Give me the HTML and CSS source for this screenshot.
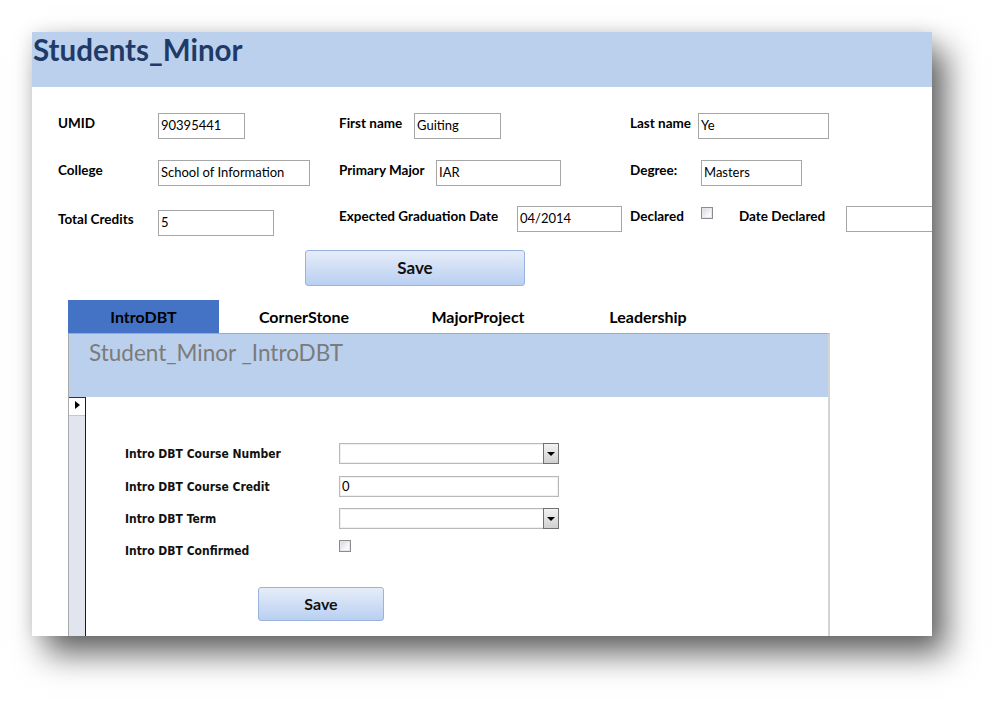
FILE: index.html
```html
<!DOCTYPE html>
<html>
<head>
<meta charset="utf-8">
<link rel="stylesheet" href="styles.css">
</head>
<body>
<div class="window">
  <div class="header"><h1 class="title">Students_Minor</h1></div>
  <div class="form">
    <div class="row r1">
      <div class="col c1"><span class="lbl w100">UMID</span><span class="box bw87">90395441</span></div>
      <div class="col c2"><span class="lbl w75">First name</span><span class="box bw87">Guiting</span></div>
      <div class="col c3"><span class="lbl w68">Last name</span><span class="box bw131">Ye</span></div>
    </div>
    <div class="row r2">
      <div class="col c1"><span class="lbl w100">College</span><span class="box bw152">School of Information</span></div>
      <div class="col c2"><span class="lbl w97">Primary Major</span><span class="box bw125">IAR</span></div>
      <div class="col c3"><span class="lbl w71">Degree:</span><span class="box bw101">Masters</span></div>
    </div>
    <div class="row r3">
      <div class="col c1 low"><span class="lbl w100 lowlbl">Total Credits</span><span class="box bw116">5</span></div>
      <div class="col c2"><span class="lbl w178">Expected Graduation Date</span><span class="box bw105">04/2014</span></div>
      <div class="col c3"><span class="lbl w71">Declared</span><span class="chk topchk"></span><span class="lbl w107">Date Declared</span><span class="box bw100"></span></div>
    </div>
    <div class="btn save-main">Save</div>
  </div>
  <div class="tabs">
    <div class="tab active t1">IntroDBT</div>
    <div class="tab t2">CornerStone</div>
    <div class="tab t3">MajorProject</div>
    <div class="tab t4">Leadership</div>
  </div>
  <div class="panel">
    <div class="panel-head"><span class="sub-title">Student_Minor _IntroDBT</span></div>
    <div class="panel-body">
      <div class="selector"><div class="sel-cell"><span class="tri"></span></div></div>
      <div class="content">
        <div class="frow"><span class="flbl">Intro DBT Course Number</span><span class="combo"><span class="combo-btn"><span class="dtri"></span></span></span></div>
        <div class="frow"><span class="flbl">Intro DBT Course Credit</span><span class="fbox">0</span></div>
        <div class="frow"><span class="flbl">Intro DBT Term</span><span class="combo"><span class="combo-btn"><span class="dtri"></span></span></span></div>
        <div class="frow"><span class="flbl">Intro DBT Confirmed</span><span class="chk"></span></div>
        <div class="btn save-sub">Save</div>
      </div>
    </div>
  </div>
</div>
</body>
</html>
```
FILE: styles.css
```css
html, body { margin: 0; padding: 0; background: #ffffff; }
body {
  box-sizing: border-box;
  min-height: 701px;
  padding: 32px 0 0 32px;
  font-family: Lato, "Open Sans", sans-serif;
}

.window {
  width: 900px;
  height: 604px;
  background: #ffffff;
  overflow: hidden;
  box-shadow: 14px 18px 30px rgba(0,0,0,0.6), 0 0 16px rgba(0,0,0,0.10);
}

.header { height: 55px; background: #bbd0ec; }
.title {
  margin: 0;
  font-family: Lato, sans-serif;
  font-weight: 700;
  font-size: 29.5px;
  line-height: 36px;
  padding: 0 0 0 1px;
  color: #1f3a68;
}

.form { padding: 26px 0 0 26px; }
.row { display: flex; height: 26px; }
.r1 { margin-bottom: 21px; }
.r2 { margin-bottom: 20px; }
.r3 { height: 30px; }
.col { display: flex; align-items: flex-start; flex: none; }
.c1 { width: 281px; }
.c2 { width: 291px; }
.c3 { width: 320px; }
.low { margin-top: 4px; }

.lbl {
  font-weight: 700;
  font-size: 13.5px;
  line-height: 16px;
  padding-top: 2px;
  color: #000;
  white-space: nowrap;
  flex: none;
}
.lowlbl { padding-top: 1px; }
.w100 { width: 100px; }
.w75 { width: 75px; }
.w68 { width: 68px; }
.w97 { width: 97px; }
.w71 { width: 71px; }
.w178 { width: 178px; }
.w107 { width: 107px; }

.box {
  box-sizing: border-box;
  height: 26px;
  border: 1px solid #a6a6a6;
  font-size: 13px;
  line-height: 18px;
  padding: 2px 0 0 2px;
  color: #000;
  white-space: nowrap;
  flex: none;
  background: #fff;
}
.bw87 { width: 87px; }
.bw131 { width: 131px; }
.bw152 { width: 152px; }
.bw125 { width: 125px; }
.bw101 { width: 101px; }
.bw116 { width: 116px; }
.bw105 { width: 105px; }
.bw100 { width: 100px; }

.chk {
  box-sizing: border-box;
  width: 12px;
  height: 12px;
  border: 1px solid #8c8c8c;
  background: linear-gradient(135deg, #d6d6d6, #f8f8ff 70%);
  box-shadow: inset 0 0 0 1px #e6e6e6;
  flex: none;
}
.topchk { margin-top: 1px; margin-right: 26px; }

.btn {
  box-sizing: border-box;
  border: 1px solid #98b3dd;
  border-radius: 3px;
  background: linear-gradient(#e6edf9, #b9cff1);
  font-weight: 700;
  color: #111;
  text-align: center;
}
.save-main {
  margin: 14px 0 0 247px;
  width: 220px;
  height: 36px;
  font-size: 17px;
  line-height: 34px;
}

.tabs { display: flex; margin: 14px 0 0 36px; height: 33px; }
.tab {
  font-weight: 700;
  font-size: 16px;
  line-height: 33px;
  text-align: center;
  color: #000;
}
.tab.active { background: #4472c4; }
.t1 { width: 151px; }
.t2 { width: 170px; }
.t3 { width: 178px; }
.t4 { width: 162px; }

.panel {
  box-sizing: border-box;
  margin-left: 36px;
  width: 762px;
  height: 320px;
  border-top: 1px solid #a9a9a9;
  border-left: 1px solid #a9a9a9;
  border-right: 2px solid #d4d4d4;
}
.panel-head {
  height: 63px;
  background: #bbd0ec;
}
.sub-title {
  display: block;
  padding: 6px 0 0 20px;
  font-size: 22.5px;
  line-height: 26px;
  color: #7b7b7b;
}
.panel-body { display: flex; height: 260px; }
.selector {
  box-sizing: border-box;
  width: 17px;
  background: #e1e6ee;
  border-right: 1px solid #1a1a1a;
  border-top: 1px solid #333;
}
.sel-cell { height: 17px; position: relative; background: #fff; border-bottom: 1px solid #c8c8c8; }
.tri {
  position: absolute;
  left: 6px;
  top: 3px;
  width: 0; height: 0;
  border-top: 4px solid transparent;
  border-bottom: 4px solid transparent;
  border-left: 5px solid #000;
}
.content { flex: 1; padding: 46px 0 0 39px; }
.frow { display: flex; height: 21px; margin-bottom: 11px; align-items: flex-start; }
.frow:first-child { margin-bottom: 12px; }
.flbl {
  width: 214px;
  flex: none;
  font-family: "DejaVu Sans Condensed", "DejaVu Sans", Verdana, sans-serif;
  font-stretch: condensed;
  font-weight: 700;
  font-size: 12px;
  line-height: 19px;
  padding-top: 2px;
  color: #111;
  white-space: nowrap;
}
.combo, .fbox {
  box-sizing: border-box;
  width: 220px;
  height: 21px;
  border: 1px solid #b9b9b9;
  box-shadow: inset 0 0 0 1px #f0f0f0;
  background: #fff;
  position: relative;
  flex: none;
}
.fbox {
  font-family: Lato, sans-serif;
  font-size: 13px;
  line-height: 19px;
  padding-left: 2px;
}
.combo-btn {
  position: absolute;
  right: -1px;
  top: -1px;
  box-sizing: border-box;
  width: 16px;
  height: 21px;
  border: 1px solid #707070;
  background: linear-gradient(#f2f2f2, #d0d0d0);
}
.dtri {
  position: absolute;
  left: 3px;
  top: 8px;
  width: 0; height: 0;
  border-left: 4px solid transparent;
  border-right: 4px solid transparent;
  border-top: 4px solid #000;
}
.frow .chk { margin-top: 0; }
.save-sub {
  margin: 26px 0 0 133px;
  width: 126px;
  height: 34px;
  font-size: 16px;
  line-height: 32px;
}
```
